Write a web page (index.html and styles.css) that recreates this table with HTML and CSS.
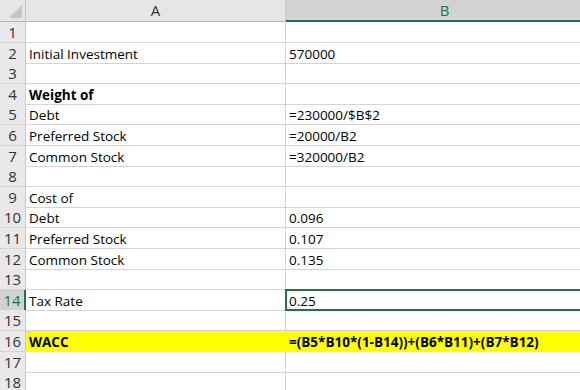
FILE: index.html
```html
<!DOCTYPE html>
<html>
<head>
	<title>WACC</title>
	<link rel="stylesheet" href="styles.css">
</head>
<body>
	<div class="sheet">
		<div class="row head-row">
			<div class="corner"><span class="tri"></span></div>
			<div class="col-head">A</div>
			<div class="col-head active">B</div>
		</div>
		<div class="row"><div class="num">1</div><div class="cell"></div><div class="cell"></div></div>
		<div class="row"><div class="num">2</div><div class="cell">Initial Investment</div><div class="cell">570000</div></div>
		<div class="row"><div class="num">3</div><div class="cell"></div><div class="cell"></div></div>
		<div class="row"><div class="num">4</div><div class="cell bold">Weight of</div><div class="cell"></div></div>
		<div class="row"><div class="num">5</div><div class="cell">Debt</div><div class="cell">=230000/$B$2</div></div>
		<div class="row"><div class="num">6</div><div class="cell">Preferred Stock</div><div class="cell">=20000/B2</div></div>
		<div class="row"><div class="num">7</div><div class="cell">Common Stock</div><div class="cell">=320000/B2</div></div>
		<div class="row"><div class="num">8</div><div class="cell"></div><div class="cell"></div></div>
		<div class="row"><div class="num">9</div><div class="cell">Cost of</div><div class="cell"></div></div>
		<div class="row"><div class="num">10</div><div class="cell">Debt</div><div class="cell">0.096</div></div>
		<div class="row"><div class="num">11</div><div class="cell">Preferred Stock</div><div class="cell">0.107</div></div>
		<div class="row"><div class="num">12</div><div class="cell">Common Stock</div><div class="cell">0.135</div></div>
		<div class="row"><div class="num">13</div><div class="cell"></div><div class="cell"></div></div>
		<div class="row"><div class="num active">14</div><div class="cell">Tax Rate</div><div class="cell selected">0.25</div></div>
		<div class="row"><div class="num">15</div><div class="cell"></div><div class="cell"></div></div>
		<div class="row"><div class="num">16</div><div class="cell bold fill">WACC</div><div class="cell bold fill">=(B5*B10*(1-B14))+(B6*B11)+(B7*B12)</div></div>
		<div class="row"><div class="num">17</div><div class="cell"></div><div class="cell"></div></div>
		<div class="row"><div class="num">18</div><div class="cell"></div><div class="cell"></div></div>
	</div>
</body>
</html>
```

FILE: styles.css
```css
body{
	margin: 0;
	background: white;
	font-family: "Open Sans", "Liberation Sans", sans-serif;
	font-size: 13.5px;
	color: #000;
	overflow: hidden;
}
.sheet{
	width: 580px;
	height: 390px;
	overflow: hidden;
}
.row{
	display: grid;
	grid-template-columns: 26px 260px 318px;
	height: 20.6px;
}
.head-row{
	height: 22px;
}
.corner{
	box-sizing: border-box;
	background: #e6e6e6;
	border-right: 1px solid #c8c8c8;
	border-bottom: 1px solid #b8b8b8;
	display: flex;
	align-items: flex-end;
	justify-content: flex-end;
	padding: 0 3px 3px 0;
}
.tri{
	width: 0;
	height: 0;
	border-left: 13px solid transparent;
	border-bottom: 13px solid #c4c4c4;
}
.col-head{
	box-sizing: border-box;
	background: #e6e6e6;
	border-right: 1px solid #c8c8c8;
	border-bottom: 1px solid #b8b8b8;
	text-align: center;
	line-height: 21px;
	font-size: 15px;
	color: #333;
}
.col-head.active{
	background: #d2d2d2;
	color: #217346;
	border-bottom: 2px solid #217346;
	line-height: 20px;
}
.num{
	box-sizing: border-box;
	background: #e9e9e9;
	border-right: 1px solid #c8c8c8;
	border-bottom: 1px solid #d4d4d4;
	text-align: center;
	line-height: 20px;
	font-size: 15px;
	color: #333;
}
.num.active{
	background: #d2d2d2;
	color: #217346;
	border-right: 2px solid #217346;
}
.cell{
	box-sizing: border-box;
	border-right: 1px solid #d4d4d4;
	border-bottom: 1px solid #d4d4d4;
	padding-left: 3px;
	display: flex;
	align-items: flex-end;
	line-height: 17px;
	white-space: nowrap;
}
.bold{
	font-weight: bold;
}
.fill{
	background: #ffff00;
	border-color: #ffff00;
}
.selected{
	position: relative;
}
.selected::after{
	content: '';
	position: absolute;
	top: -1px;
	left: -1px;
	right: -1px;
	bottom: -1px;
	border: 2px solid #217346;
}
```
